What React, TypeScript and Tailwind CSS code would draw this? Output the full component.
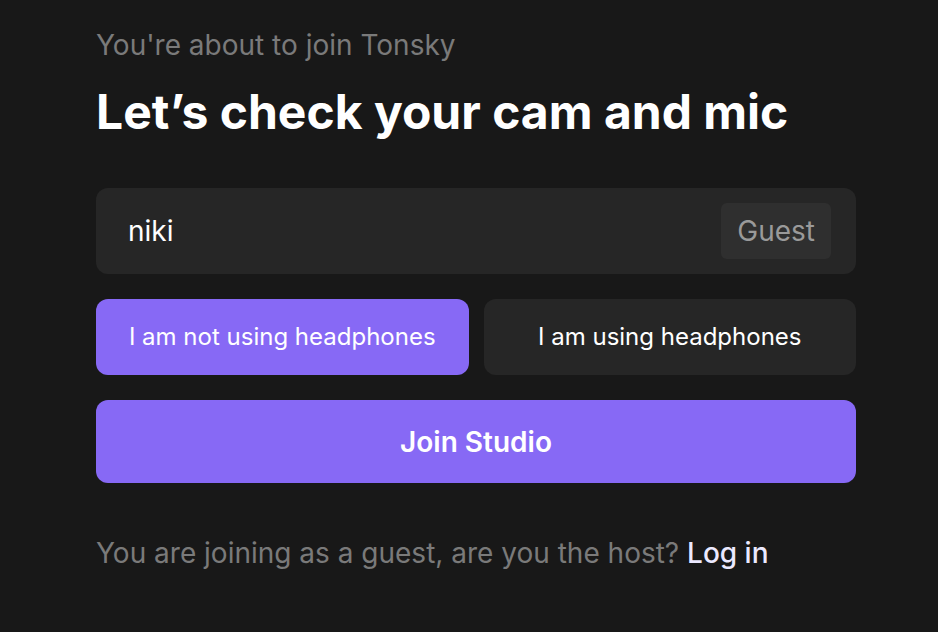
import React from "react";

export default function App() {
  return (
    <div
      className="min-h-screen w-full bg-[#181818] text-white"
      style={{ fontFamily: "Inter, 'Noto Sans', sans-serif" }}
    >
      <div className="w-[760px] ml-[96px] pt-[27px]">
        <p className="text-[28px] leading-[36px] text-[#7a7a7a]">
          You're about to join Tonsky
        </p>
        <h1 className="mt-[21px] text-[48px] leading-[56px] font-bold">
          Let’s check your cam and mic
        </h1>

        <div className="mt-[48px] h-[86px] rounded-xl bg-[#262626] flex items-center pl-8 pr-[25px]">
          <span className="flex-1 text-[28px]">niki</span>
          <span className="h-[56px] px-4 flex items-center rounded-md bg-[#2f2f2f] text-[28px] text-[#9a9a9a]">
            Guest
          </span>
        </div>

        <div className="mt-[25px] grid grid-cols-2 gap-[15px]">
          <button className="h-[76px] rounded-xl bg-[#8769f5] text-[24px] text-white">
            I am not using headphones
          </button>
          <button className="h-[76px] rounded-xl bg-[#262626] text-[24px] text-white">
            I am using headphones
          </button>
        </div>

        <button className="mt-[25px] w-full h-[83px] rounded-xl bg-[#8769f5] text-[28px] font-semibold text-white">
          Join Studio
        </button>

        <p className="mt-[52px] text-[28px] leading-[36px] text-[#7a7a7a]">
          You are joining as a guest, are you the host?{" "}
          <span className="text-[#ebe9ff] font-medium">Log in</span>
        </p>
      </div>
    </div>
  );
}
